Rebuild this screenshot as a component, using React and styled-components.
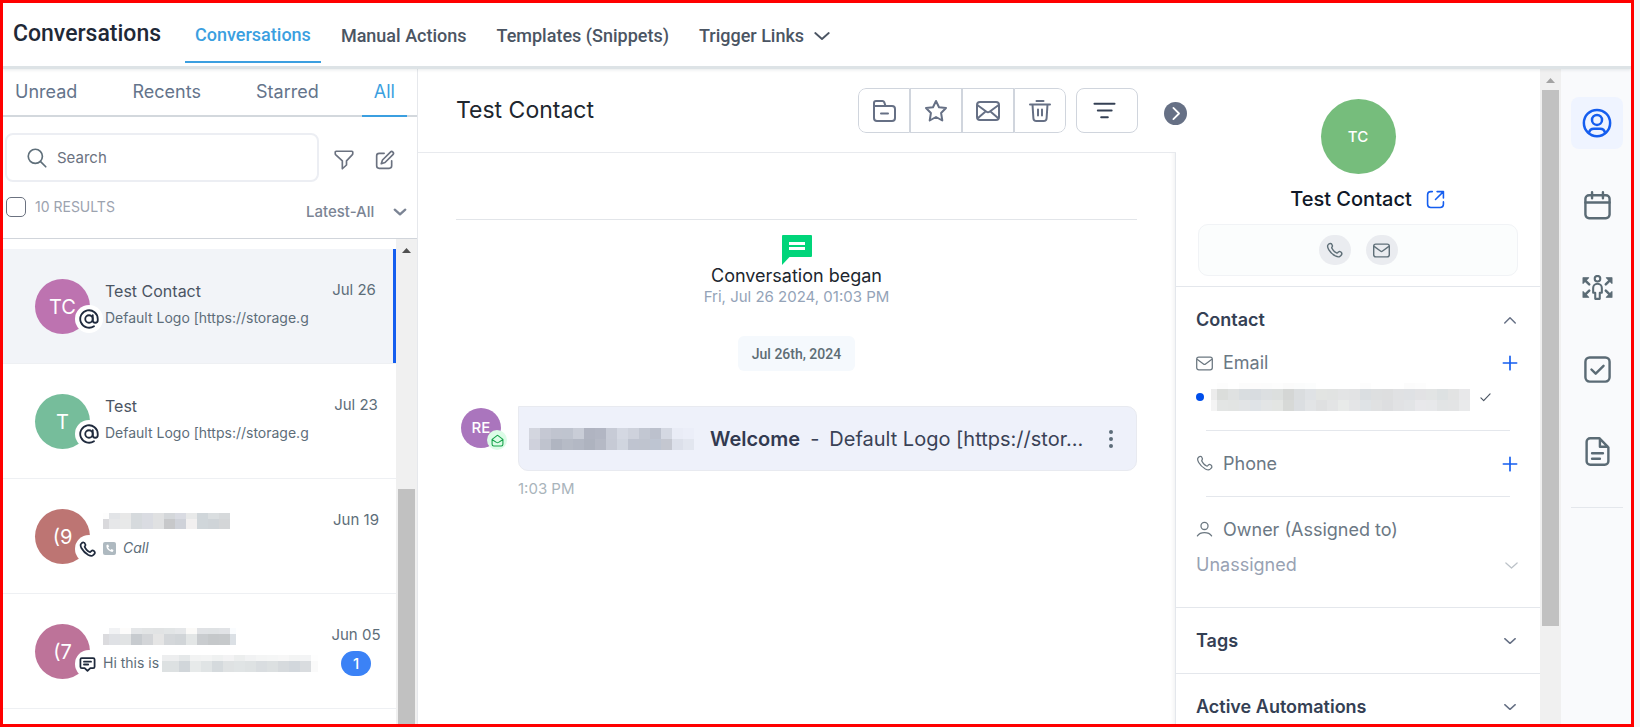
import React from "react";
import styled, { createGlobalStyle, css } from "styled-components";

const GlobalStyle = createGlobalStyle`
  *, *::before, *::after { box-sizing: border-box; }
  html, body, #root { height: 100%; }
  body {
    margin: 0;
    overflow: hidden;
    background: #f3f7fa;
    color: #2a3342;
    font-family: Inter, "Liberation Sans", sans-serif;
  }
  button, input, select { font: inherit; color: inherit; }
  button { padding: 0; border: 0; background: none; cursor: pointer; }
  a { color: inherit; text-decoration: none; }
  h1, h2, h3, p, ul { margin: 0; padding: 0; font-weight: inherit; }
  ul { list-style: none; }
  svg { display: block; flex: none; }
`;

/* ---------- icons ---------- */

const Svg = ({ size = 20, width, height, stroke = 2, box = "0 0 24 24", children }) => (
  <svg
    width={width || size}
    height={height || size}
    viewBox={box}
    fill="none"
    stroke="currentColor"
    strokeWidth={stroke}
    strokeLinecap="round"
    strokeLinejoin="round"
    aria-hidden="true"
  >
    {children}
  </svg>
);

const ChevronDown = (p) => <Svg {...p}><path d="M3 8l9 8 9-8" /></Svg>;
const ChevronUp = (p) => <Svg {...p}><path d="M3 17l9-9 9 9" /></Svg>;
const ChevronRight = (p) => <Svg {...p}><path d="M9 4l8 8-8 8" /></Svg>;
const SearchIcon = (p) => <Svg {...p}><circle cx="10" cy="10" r="8.500" /><path d="M16 16l6.500 6.500" /></Svg>;
const FunnelIcon = (p) => <Svg {...p}><path d="M2.500 1.500h19a1 1 0 0 1 1 1v2c0 .6-.3 1-.7 1.400L15 13v5l-5 4.500V13L2.200 5.900c-.4-.4-.7-.8-.7-1.400v-2a1 1 0 0 1 1-1z" /></Svg>;
const EditIcon = (p) => (
  <Svg {...p}>
    <path d="M11 4H5a3 3 0 0 0-3 3v12a3 3 0 0 0 3 3h12a3 3 0 0 0 3-3v-6" />
    <path d="M18.500 2.500a2.100 2.100 0 0 1 3 3L12 15l-4.500 1.500L9 12z" />
  </Svg>
);
const FolderMinus = (p) => (
  <Svg {...p}>
    <path d="M2 7V4a2 2 0 0 1 2-2h6.500c.8 0 1.400.4 1.700 1.100L13.500 7" />
    <path d="M2 7h18a3 3 0 0 1 3 3v9a3 3 0 0 1-3 3H5a3 3 0 0 1-3-3zM9 14.500h7" />
  </Svg>
);
const StarIcon = (p) => <Svg {...p}><path d="M12 2l3 6.200 7 .8-4.900 5 1.200 7.500L12 18l-6.300 3.500L6.900 14 2 9l7-.8z" /></Svg>;
const UnreadMail = (p) => (
  <Svg {...p}>
    <rect x="1" y="3" width="22" height="18" rx="3" />
    <path d="M2 6.500l8.500 6.200c.9.7 2.100.7 3 0L22 6.500M2 19l7-6M22 19l-7-6" />
  </Svg>
);
const TrashIcon = (p) => (
  <Svg {...p}>
    <path d="M8.500 2h7M2 5.500h20M4.500 5.500l.9 13.700A3 3 0 0 0 8.400 22h7.200a3 3 0 0 0 3-2.800l.9-13.700M10 10.500v6M14 10.500v6" />
  </Svg>
);
const LinesIcon = (p) => <Svg {...p}><path d="M1.500 5h21M5 12h14.500M8.500 19h7" /></Svg>;
const AtIcon = (p) => (
  <Svg {...p}>
    <circle cx="12" cy="12" r="4.500" />
    <path d="M16.500 7.500v6a3 3 0 0 0 6 0V12a10.500 10.500 0 1 0-4.500 8.600" />
  </Svg>
);
const PhoneIcon = (p) => (
  <Svg {...p}>
    <path d="M8.400 8.900a14 14 0 0 0 2.700 3.900 14 14 0 0 0 3.900 2.700c.3.100.7.100 1-.1l.5-.4c.9-.9 1.300-1.300 1.800-1.500.8-.3 1.600-.2 2.300.3l.5.300c1 .9 1.500 1.800 1.300 2.900-.2.800-.8 1.500-1.600 2.300-.8.800-1.300 1.300-2 1.500-1.600.5-3.600-.1-5.600-1.100a24 24 0 0 1-9.600-9.400C2.500 8.200 1.900 6.600 2.400 5c.3-.9.900-1.500 1.600-2.100.9-.7 1.700-1.100 2.600-.8.8.2 1.500.9 2 1.900.6 1 .7 1.800.2 2.700l-.6.8c-.3.400-.2.800.2 1.400z" />
  </Svg>
);
const ChatLines = (p) => (
  <Svg {...p}>
    <path d="M4 3h16a2 2 0 0 1 2 2v10a2 2 0 0 1-2 2h-4l-4 4-4-4H4a2 2 0 0 1-2-2V5a2 2 0 0 1 2-2zM7 8h10M7 12h6" />
  </Svg>
);
const MailIcon = (p) => (
  <Svg {...p}>
    <rect x="1" y="3" width="22" height="18" rx="3" />
    <path d="M2 6.500l8.500 6.200c.9.700 2.100.7 3 0L22 6.500" />
  </Svg>
);
const OpenMail = (p) => (
  <Svg {...p}>
    <path d="M2 10l9-7q1-.8 2 0l9 7v9a3 3 0 0 1-3 3H5a3 3 0 0 1-3-3zM2.500 10.500L10 15.500q2 1.200 4 0l7.500-5" />
  </Svg>
);
const ExternalIcon = (p) => (
  <Svg {...p}>
    <path d="M8 2H6a4 4 0 0 0-4 4v12a4 4 0 0 0 4 4h12a4 4 0 0 0 4-4v-3M14 2h8v8M22 2L12 12" />
  </Svg>
);
const PersonIcon = (p) => <Svg {...p}><circle cx="12" cy="7" r="5" /><path d="M2 21c2-3 6-4.500 10-4.500S20 18 22 21" /></Svg>;
const PlusIcon = (p) => <Svg {...p}><path d="M12 2v20M2 12h20" /></Svg>;
const CheckIcon = (p) => <Svg {...p}><path d="M2 13l6 6L22 4" /></Svg>;
const UserCircle = (p) => (
  <Svg {...p}>
    <circle cx="12" cy="12" r="10.500" />
    <circle cx="12" cy="9.500" r="4" />
    <path d="M5.500 20c.4-2 1.800-3.500 4-3.500h5c2.200 0 3.600 1.500 4 3.500" />
  </Svg>
);
const CalendarIcon = (p) => <Svg {...p}><rect x="2" y="3.500" width="20" height="19" rx="3" /><path d="M2 9.500h20M7.500 1v5M16.500 1v5" /></Svg>;
const TaskIcon = (p) => <Svg {...p}><rect x="2" y="2" width="20" height="20" rx="3.500" /><path d="M7 12l3.500 3.500L17 9" /></Svg>;
const NoteIcon = (p) => (
  <Svg {...p}>
    <path d="M13.500 1H6a3 3 0 0 0-3 3v16a3 3 0 0 0 3 3h12a3 3 0 0 0 3-3V8.500zM14 1.500V8h6.500M7.500 13.500h9M7.500 18h6.500" />
  </Svg>
);
const PeopleArrows = (p) => (
  <Svg {...p} box="0 0 30 24">
    <circle cx="15" cy="3.500" r="2.700" />
    <path d="M10.800 17v-4.500a4.200 4.200 0 0 1 8.400 0V17h-2v6h-4.400v-6z" />
    <path d="M1 2.500h5.500L1 8zM29 2.500h-5.500L29 8zM1 21.500h5.500L1 16zM29 21.500h-5.500L29 16z" fill="currentColor" strokeWidth="1" />
    <path d="M3 5l4 4M27 5l-4 4M3 19l4-4M27 19l-4-4" strokeWidth="2.400" />
  </Svg>
);
const ChatBlock = () => (
  <svg width="30" height="30" viewBox="0 0 30 30" aria-hidden="true">
    <path d="M1 0h28a1 1 0 0 1 1 1v20a1 1 0 0 1-1 1H7.500L0 30V1a1 1 0 0 1 1-1z" fill="#00d57a" />
    <path d="M7 7h16v3H7zM7 12h16v3H7z" fill="#fff" />
  </svg>
);
const CallTile = () => (
  <svg width="13" height="13" viewBox="0 0 13 13" aria-hidden="true">
    <rect width="13" height="13" rx="2" fill="#aeb9c0" />
    <path d="M3.500 3l1.600-.5 1 2-1 1q.8 1.600 2.400 2.400l1-1 2 1-.5 1.700Q9 10.500 6 8.500T3.500 3z" fill="#fff" />
  </svg>
);
const Triangle = () => (
  <svg width="9" height="5" viewBox="0 0 9 5" aria-hidden="true"><path d="M4.500 0L9 5H0z" fill="currentColor" /></svg>
);

/* Blocks that hide private names; each row is [height, cells]. Cells are 11px wide, the outer two may be cut. */
const Mosaic = ({ first = 6, last = 11, rows }) => {
  const count = rows[0][1].split(" ").length;
  const width = first + 11 * (count - 2) + last;
  let y = 0;
  return (
    <svg width={width} height={rows.reduce((s, r) => s + r[0], 0)} shapeRendering="crispEdges" aria-hidden="true">
      {rows.map(([h, cells], r) => {
        const top = y;
        y += h;
        return cells.split(" ").map((c, i) => (
          <rect
            key={`${r}-${i}`}
            x={i === 0 ? 0 : first + 11 * (i - 1)}
            y={top}
            width={i === 0 ? first : i === count - 1 ? last : 11}
            height={h}
            fill={`#${c}`}
          />
        ));
      })}
    </svg>
  );
};

const emailMosaic = [
  [6, "fff fdfdfd fff fcfcfc fdfcfc fcfcfc fdfdfd fbfbfb fbfcfc fcfdfd fff fff fff fff fdfdfd fff fff fff fcfcfc fdfdfd fff fff fff fff"],
  [11, "ececec dbdddb dfe1e1 d9dde0 d8dce0 dcdfe1 dcdfde d4d6d5 dadddf dfe2e5 e2e4e2 e1e3e2 e3e4e5 e2e3e4 dadee1 dddfe0 dddedf e0e1e3 dfe1e4 e2e2e4 e2e4e4 dde1e2 e2e3e3 e8e8ea"],
  [11, "f4f4f4 e3e5e4 e2e4e3 e2e4e6 dfe3e7 e3e5e6 e3e5e3 d7d9d7 dbdee1 e2e4e6 dfe0e1 e3e4e5 e8eae9 e4e5e7 dfe3e6 e0e1e2 dddee0 e1e2e4 e2e4e6 e8e8eb e7e8ea e2e4e5 e3e4e5 e9eaeb"],
];
const callMosaic = [
  [6, "fdfdfd e2e4e7 e8e8e8 d6dadd dadce2 e0e1e2 d4d7da d9dbe2 e8e9e9 d0d6da dadee0 d6d9db"],
  [10, "d9d9dc e6e7e9 e8e9e9 d6dadd dadce2 e0e1e2 c7c8ca cfd2d9 f2f0f0 d0d6da cfd4d8 d4d6d8"],
];
const smsMosaic = [
  [6, "fff f1f2f4 fdfcfb e4e6e8 e2e4e5 e1e3e4 e2e5e6 e5e7e9 fbfaf8 e0e2e5 dfe2e4 e1e3e6 fafcfe"],
  [11, "dbdbde dfe1e5 e1e3e4 c7cbcf d3d5d8 e5e5e5 d4d7da d1d5d8 e3e6e6 c9cccf c5c8ca c6c9cb dbe0e5"],
];
const hiMosaic = [
  [6, "edeeef e5e8e9 f2f3f3 f3f4f4 eff1f1 f3f3f4 eceeee f1f2f3 f4f5f5 f5f6f6 f7f7f7 f3f4f4 f3f4f5 fefefe"],
  [11, "dde1e2 d1d6da e7eaea e0e4e5 d5dadd dfe2e3 e0e4e5 dee2e3 d9dde0 dce0e1 d6dadd d2d7dc d9dcdf fafafa"],
];
const senderMosaic = [
  [11, "d3d6df c5c8d3 c0c4cf bfc4cf c9cdd7 b0b4c1 b2b6c3 c7cbd6 d4d8e2 ced2dc c2c7d2 bcc1cd d4d8e2 e9ecf6 ebeef8"],
  [11, "cfd1dc bfc3ce b0b5c1 b6bbc6 b3b8c4 aeb3bf b5b9c5 c6cad5 d0d5df bfc4d0 bfc4cf bec5d2 c4c7d0 dce0ea e2e6ef"],
];

/* ---------- shell ---------- */

const Frame = styled.div`
  display: flex;
  flex-direction: column;
  height: 100%;
  margin-right: 6px;
  border: 3px solid #ff0000;
  background: #fff;
  overflow: hidden;
`;

const TopBar = styled.header`
  display: flex;
  align-items: stretch;
  flex: none;
  height: 66px;
  padding-left: 10px;
  border-bottom: 3px solid #dde3e6;
  box-shadow: 0 1px 3px rgba(60, 80, 90, 0.12);
  position: relative;
  z-index: 2;
  font-family: Roboto, "Liberation Sans", sans-serif;
  font-weight: 500;
`;

const AppTitle = styled.h1`
  margin-right: 24px;
  padding-top: 17px;
  color: #1f2937;
  font-size: 23px;
  line-height: 28px;
  font-weight: 500;
`;

const TopNav = styled.nav`
  display: flex;
  gap: 10px;
  height: 60px;
`;

const navItem = css`
  display: flex;
  align-items: center;
  gap: 9px;
  padding: 6px 10px 0;
  color: #4b5563;
  font-size: 18px;
  line-height: 24px;
  font-weight: 500;
`;
const NavLink = styled.a`
  ${navItem}
  ${(p) => p.$active && css`
    color: #3b9fe0;
    border-bottom: 2px solid #3b9fe0;
  `}
`;
const NavMenu = styled.button`
  ${navItem}
`;

const Body = styled.div`
  display: flex;
  flex: 1;
  min-height: 0;
`;

/* ---------- scroll bar ---------- */

const Track = styled.div`
  flex: none;
  display: flex;
  flex-direction: column;
  align-items: center;
  width: 21px;
  padding-top: ${(p) => p.$top}px;
  background: #f0f0f0;
  color: ${(p) => p.$arrow};
`;
const Thumb = styled.div`
  width: 17px;
  flex: 0 0 ${(p) => p.$length};
  margin-top: ${(p) => p.$gap}px;
  background: #c1c1c1;
`;

/* ---------- conversation list ---------- */

const Sidebar = styled.aside`
  display: flex;
  flex-direction: column;
  flex: none;
  width: 415px;
  border-right: 1px solid #e6e8ec;
`;

const Tabs = styled.div`
  display: flex;
  justify-content: space-between;
  flex: none;
  height: 48px;
  padding-right: 10px;
  border-bottom: 2px solid #d3d8dd;
`;
const Tab = styled.button`
  height: 48px;
  padding: 0 12px;
  border-bottom: 2px solid ${(p) => (p.$active ? "#3b9fe0" : "transparent")};
  color: ${(p) => (p.$active ? "#3b9fe0" : "#64748b")};
  font-size: 18px;
  line-height: 24px;
`;

const Tools = styled.div`
  flex: none;
  height: 122px;
  border-bottom: 1px solid #d1d5db;
`;
const SearchRow = styled.div`
  display: flex;
  align-items: center;
  gap: 15px;
  padding: 16px 24px 0 2px;
  color: #6b7280;
`;
const SearchBox = styled.label`
  display: flex;
  align-items: center;
  gap: 10px;
  flex: 1;
  height: 49px;
  padding: 0 20px;
  border: 2px solid #eceef3;
  border-radius: 8px;
  color: #5f6f7a;
`;
const SearchInput = styled.input`
  flex: 1;
  min-width: 0;
  padding: 1px 0 0;
  border: 0;
  outline: 0;
  background: none;
  font-size: 15px;
  line-height: 20px;
  &::placeholder { color: #6b7280; opacity: 1; }
`;
const IconButton = styled.button`
  display: flex;
  width: 20px;
  padding-top: 4px;
  justify-content: center;
  & + & { margin: 0 6px; }
`;
const ResultRow = styled.div`
  display: flex;
  align-items: flex-start;
  justify-content: space-between;
  padding: 15px 10px 0 3px;
`;
const SelectAll = styled.label`
  display: flex;
  align-items: center;
  gap: 9px;
  color: #9ca3af;
  font-size: 14px;
  line-height: 20px;
`;
const CheckBox = styled.input`
  appearance: none;
  width: 20px;
  height: 20px;
  margin: 0;
  border: 1px solid #6b7280;
  border-radius: 5px;
`;
const SortBox = styled.label`
  display: flex;
  align-items: center;
  margin-top: 5px;
  color: #7b8494;
`;
const SortSelect = styled.select`
  appearance: none;
  width: 87px;
  padding: 0;
  border: 0;
  background: none;
  font-size: 15px;
  line-height: 20px;
  font-weight: 500;
`;

const ListArea = styled.div`
  display: flex;
  flex: 1;
  min-height: 0;
`;
const List = styled.ul`
  flex: 1;
  padding-top: 10px;
  overflow: hidden;
`;
const Item = styled.li`
  display: flex;
  height: 115px;
  padding: 30px 10px 0 32px;
  border-bottom: 1px solid #eef0f3;
  ${(p) => p.$active && css`
    padding-right: 12px;
    background: #f2f4f8;
    box-shadow: inset -3px 0 0 #155eef;
  `}
`;
const AvatarWrap = styled.div`
  position: relative;
  flex: none;
  width: ${(p) => p.$size}px;
  height: ${(p) => p.$size}px;
`;
const Avatar = styled.div`
  display: flex;
  align-items: center;
  justify-content: center;
  width: ${(p) => p.$size}px;
  height: ${(p) => p.$size}px;
  border-radius: 50%;
  background: ${(p) => p.$color};
  color: #fff;
  font-size: ${(p) => p.$font}px;
  line-height: 24px;
  font-weight: ${(p) => p.$weight || 400};
`;
const ChannelBadge = styled.span`
  position: absolute;
  left: 40px;
  top: 26px;
  display: flex;
  align-items: center;
  justify-content: center;
  width: 28px;
  height: 28px;
  padding-right: ${(p) => (p.$small ? 4 : 0)}px;
  border-radius: 50%;
  background: #fff;
  color: #1f2a3d;
`;
const ItemText = styled.div`
  display: flex;
  flex-direction: column;
  gap: 7px;
  flex: 1;
  min-width: 0;
  padding: 2px 0 0 ${(p) => (p.$hidden ? 13 : 15)}px;
`;
const ItemName = styled.h3`
  display: flex;
  align-items: center;
  height: 20px;
  color: #4b5563;
  font-size: 16px;
  line-height: 20px;
`;
const Preview = styled.p`
  display: flex;
  align-items: center;
  gap: ${(p) => p.$gap || 0}px;
  height: 20px;
  white-space: nowrap;
  color: #5d6d79;
  font-size: 14px;
  line-height: 20px;
`;
const ItemMeta = styled.div`
  display: flex;
  flex-direction: column;
  align-items: center;
  gap: 6px;
  flex: none;
  width: 60px;
  padding-top: 1px;
  color: #5d6d79;
  font-size: 15px;
  line-height: 20px;
  white-space: nowrap;
`;
const Count = styled.span`
  padding: 0 12px;
  border-radius: 13px;
  background: #3b82f6;
  color: #fff;
  font-size: 15px;
  line-height: 25px;
  font-weight: 500;
`;

/* ---------- message thread ---------- */

const Thread = styled.main`
  display: flex;
  flex-direction: column;
  flex: 1;
  min-width: 0;
`;
const ThreadHead = styled.div`
  display: flex;
  align-items: center;
  flex: none;
  height: 84px;
  padding: 0 38px;
  border-bottom: 1px solid #e8eaee;
`;
const ThreadTitle = styled.h2`
  flex: 1;
  padding-bottom: 1px;
  color: #20262e;
  font-size: 23px;
  line-height: 28px;
`;
const Group = styled.div`
  display: flex;
  margin-right: 10px;
  border-radius: 8px;
  overflow: hidden;
`;
const ToolButton = styled.button`
  display: flex;
  align-items: center;
  justify-content: center;
  width: 52px;
  height: 45px;
  border: 1px solid #d0d5dd;
  color: #667085;
  &:first-child { border-radius: 8px 0 0 8px; }
  &:last-child { border-radius: 0 8px 8px 0; }
`;
const FilterButton = styled.button`
  display: flex;
  align-items: center;
  width: 62px;
  height: 45px;
  padding-left: 16px;
  border: 1px solid #d0d5dd;
  border-radius: 8px;
  color: #344054;
`;
const Messages = styled.div`
  flex: 1;
  padding: 66px 38px 0;
  border-right: 1px solid #e4e7ec;
  box-shadow: inset -4px 0 4px -3px rgba(16, 24, 40, 0.07);
`;
const Began = styled.div`
  display: flex;
  flex-direction: column;
  align-items: center;
  padding-top: 15px;
  border-top: 1px solid #e2e5e9;
`;
const BeganTitle = styled.p`
  color: #20262e;
  font-size: 18px;
  line-height: 22px;
`;
const BeganDate = styled.p`
  color: #94a3b8;
  font-size: 15px;
  line-height: 20px;
`;
const DayPill = styled.p`
  margin: 29px 0 35px;
  padding: 2px 14px 0;
  border-radius: 6px;
  background: #f5f9fd;
  color: #5d6d75;
  font-family: Roboto, "Liberation Sans", sans-serif;
  font-size: 14px;
  line-height: 33px;
  font-weight: 500;
`;
const MessageRow = styled.div`
  display: flex;
  gap: 17px;
  padding-left: 5px;
`;
const SenderAvatar = styled(AvatarWrap)`
  margin-top: 2px;
`;
const MailBadge = styled.span`
  position: absolute;
  left: 26px;
  top: 22px;
  display: flex;
  align-items: center;
  justify-content: center;
  width: 20px;
  height: 20px;
  border-radius: 50%;
  background: #dcfce7;
  color: #16a34a;
`;
const MessageCol = styled.div`
  flex: 1;
  min-width: 0;
`;
const Bubble = styled.div`
  display: flex;
  align-items: center;
  height: 65px;
  padding: 0 23px 0 10px;
  border: 1px solid #e8eaf0;
  border-radius: 0 10px 10px 10px;
  background: #eef1fa;
  color: #3a4256;
  font-size: 20px;
  line-height: 28px;
`;
const Subject = styled.strong`
  margin: 0 10px 0 16px;
  color: #323a50;
  font-weight: 600;
  white-space: nowrap;
`;
const Excerpt = styled.span`
  flex: 1;
  min-width: 0;
  margin-left: 10px;
  white-space: nowrap;
`;
const Kebab = styled.button`
  display: grid;
  gap: 3px;
  &::before, &::after, & > span {
    content: "";
    width: 4px;
    height: 4px;
    border-radius: 50%;
    background: #5d6d79;
  }
`;
const Time = styled.time`
  display: block;
  margin-top: 8px;
  color: #a9b4bb;
  font-size: 15px;
  line-height: 20px;
`;

/* ---------- contact panel ---------- */

const Panel = styled.aside`
  position: relative;
  flex: none;
  width: 364px;
  height: 100%;
`;
const PanelBody = styled.div`
  height: 100%;
  overflow: hidden;
`;
const Collapse = styled.button`
  position: absolute;
  left: -12px;
  top: 33px;
  z-index: 1;
  display: flex;
  align-items: center;
  justify-content: center;
  width: 23px;
  height: 23px;
  border-radius: 50%;
  background: #667085;
  color: #fff;
`;
const Profile = styled.div`
  display: flex;
  flex-direction: column;
  align-items: center;
  padding: 30px 22px 10px;
  border-bottom: 1px solid #e4e7ec;
`;
const ProfileName = styled.h2`
  display: flex;
  align-items: center;
  gap: 14px;
  margin: 11px 0;
  padding-left: 19px;
  color: #101828;
  font-size: 20px;
  line-height: 28px;
  font-weight: 500;
  a { color: #155eef; }
`;
const Actions = styled.div`
  display: flex;
  align-items: center;
  justify-content: center;
  gap: 15px;
  width: 100%;
  height: 52px;
  border: 1px solid #f1f3f6;
  border-radius: 10px;
  background: #fbfdfd;
`;
const ActionButton = styled.button`
  display: flex;
  align-items: center;
  justify-content: center;
  width: 32px;
  height: 30px;
  border-radius: 16px;
  background: #eaecf0;
  color: #5f6f78;
`;
const Section = styled.section`
  padding: 0 20px;
  border-bottom: 1px solid #e4e7ec;
  color: #6b7884;
  font-size: 18px;
  line-height: 24px;
`;
const SectionHead = styled.button`
  display: flex;
  align-items: center;
  justify-content: space-between;
  width: 100%;
  height: 65px;
  padding-right: 3px;
  color: #344054;
  font-size: 18px;
  line-height: 24px;
  font-weight: 600;
  svg { color: #667085; }
`;
const Field = styled.div`
  display: flex;
  align-items: center;
  height: ${(p) => p.$height || 22}px;
  padding-top: ${(p) => p.$top || 0}px;
  padding-right: 2px;
`;
const FieldIcon = styled.span`
  display: flex;
  width: 27px;
  color: #6b7780;
`;
const FieldName = styled.span`
  flex: 1;
`;
const AddButton = styled.button`
  color: #155eef;
`;
const Rule = styled.hr`
  height: 1px;
  margin: 0 10px;
  border: 0;
  background: #e4e7ec;
`;
const EmailValue = styled.div`
  display: flex;
  align-items: center;
  gap: 10px;
  height: 56px;
  padding-bottom: 10px;
  color: #4b5563;
`;
const Dot = styled.span`
  width: 8px;
  height: 8px;
  margin-right: -3px;
  border-radius: 50%;
  background: #004eeb;
`;
const OwnerBox = styled.div`
  display: flex;
  align-items: center;
  height: 24px;
  margin-bottom: 30px;
  padding-right: 1px;
  color: #bcc2c8;
`;
const OwnerSelect = styled.select`
  flex: 1;
  appearance: none;
  padding: 0;
  border: 0;
  background: none;
  color: #98a2b3;
  font-size: 18px;
  line-height: 24px;
`;

/* ---------- icon rail ---------- */

const Rail = styled.nav`
  display: flex;
  flex-direction: column;
  align-items: center;
  gap: 30px;
  flex: none;
  width: 70px;
  padding-top: 28px;
  padding-left: 2px;
  background: #f9fafc;
  color: #5b6b75;
`;
const RailButton = styled.button`
  display: flex;
  align-items: center;
  justify-content: center;
  width: 52px;
  height: 52px;
  border-radius: 8px;
  ${(p) => p.$active && css`
    background: #eff4ff;
    color: #155eef;
  `}
`;
const RailRule = styled.hr`
  width: 52px;
  height: 1px;
  margin: 0;
  border: 0;
  background: #e4e7ec;
`;

/* ---------- content ---------- */

const conversations = [
  { id: 1, initials: "TC", color: "#bd73b0", channel: "mail", name: "Test Contact", text: "Default Logo [https://storage.g", date: "Jul 26", active: true },
  { id: 2, initials: "T", color: "#76bd9b", channel: "mail", name: "Test", text: "Default Logo [https://storage.g", date: "Jul 23" },
  { id: 3, initials: "(9", color: "#bd7573", channel: "call", mosaic: callMosaic, date: "Jun 19" },
  { id: 4, initials: "(7", color: "#bd7399", channel: "sms", mosaic: smsMosaic, last: 6, date: "Jun 05", count: 1 },
];

const channelIcon = {
  mail: <AtIcon size={20} stroke={2.200} />,
  call: <PhoneIcon size={17} stroke={2.500} />,
  sms: <ChatLines size={17} stroke={2.500} />,
};

function Conversation({ item }) {
  return (
    <Item $active={item.active}>
      <AvatarWrap $size={55}>
        <Avatar $size={55} $color={item.color} $font={20}>{item.initials}</Avatar>
        <ChannelBadge $small={item.channel !== "mail"}>{channelIcon[item.channel]}</ChannelBadge>
      </AvatarWrap>
      <ItemText $hidden={!item.name}>
        <ItemName>{item.name || <Mosaic rows={item.mosaic} last={item.last} />}</ItemName>
        {item.channel === "mail" && <Preview>{item.text}</Preview>}
        {item.channel === "call" && <Preview $gap={7}><CallTile /><em>Call</em></Preview>}
        {item.channel === "sms" && <Preview $gap={3}>Hi this is <Mosaic rows={hiMosaic} first={17} last={7} /></Preview>}
      </ItemText>
      <ItemMeta>
        <span>{item.date}</span>
        {item.count && <Count>{item.count}</Count>}
      </ItemMeta>
    </Item>
  );
}

export default function App() {
  return (
    <>
      <GlobalStyle />
      <Frame>
        <TopBar>
          <AppTitle>Conversations</AppTitle>
          <TopNav aria-label="Sections">
            <NavLink href="#conversations" $active>Conversations</NavLink>
            <NavLink href="#manual">Manual Actions</NavLink>
            <NavLink href="#templates">Templates (Snippets)</NavLink>
            <NavMenu type="button">Trigger Links<ChevronDown size={18} stroke={2.500} /></NavMenu>
          </TopNav>
        </TopBar>
        <Body>
          <Sidebar>
            <Tabs role="tablist">
              <Tab role="tab">Unread</Tab>
              <Tab role="tab">Recents</Tab>
              <Tab role="tab">Starred</Tab>
              <Tab role="tab" aria-selected="true" $active>All</Tab>
            </Tabs>
            <Tools>
              <SearchRow>
                <SearchBox>
                  <SearchIcon size={20} />
                  <SearchInput type="search" placeholder="Search" aria-label="Search" />
                </SearchBox>
                <IconButton aria-label="Filter"><FunnelIcon size={20} /></IconButton>
                <IconButton aria-label="Compose"><EditIcon size={20} /></IconButton>
              </SearchRow>
              <ResultRow>
                <SelectAll><CheckBox type="checkbox" />10 RESULTS</SelectAll>
                <SortBox>
                  <SortSelect aria-label="Sort"><option>Latest-All</option></SortSelect>
                  <ChevronDown size={14} stroke={4} />
                </SortBox>
              </ResultRow>
            </Tools>
            <ListArea>
              <List>{conversations.map((c) => <Conversation key={c.id} item={c} />)}</List>
              <Track $top={9} $arrow="#505050">
                <Triangle />
                <Thumb $gap={236} $length="100%" />
              </Track>
            </ListArea>
          </Sidebar>

          <Thread>
            <ThreadHead>
              <ThreadTitle>Test Contact</ThreadTitle>
              <Group>
                <ToolButton aria-label="Archive"><FolderMinus size={24} /></ToolButton>
                <ToolButton aria-label="Star"><StarIcon size={24} /></ToolButton>
                <ToolButton aria-label="Mark unread"><UnreadMail size={24} /></ToolButton>
                <ToolButton aria-label="Delete"><TrashIcon size={24} /></ToolButton>
              </Group>
              <FilterButton aria-label="Filter messages"><LinesIcon size={23} /></FilterButton>
            </ThreadHead>
            <Messages>
              <Began>
                <ChatBlock />
                <BeganTitle>Conversation began</BeganTitle>
                <BeganDate>Fri, Jul 26 2024, 01:03 PM</BeganDate>
                <DayPill>Jul 26th, 2024</DayPill>
              </Began>
              <MessageRow>
                <SenderAvatar $size={40}>
                  <Avatar $size={40} $color="#aa75bd" $font={15} $weight={500}>RE</Avatar>
                  <MailBadge><OpenMail size={13} stroke={2} /></MailBadge>
                </SenderAvatar>
                <MessageCol>
                  <Bubble>
                    <Mosaic first={11} rows={senderMosaic} />
                    <Subject>Welcome</Subject>
                    <span>-</span>
                    <Excerpt>Default Logo [https://stor...</Excerpt>
                    <Kebab aria-label="Message options"><span /></Kebab>
                  </Bubble>
                  <Time>1:03 PM</Time>
                </MessageCol>
              </MessageRow>
            </Messages>
          </Thread>

          <Panel>
            <Collapse aria-label="Collapse panel"><ChevronRight size={17} stroke={2.500} /></Collapse>
            <PanelBody>
              <Profile>
                <Avatar $size={75} $color="#76bd7c" $font={15} $weight={500}>TC</Avatar>
                <ProfileName>
                  Test Contact
                  <a href="#contact" aria-label="Open contact"><ExternalIcon size={19} /></a>
                </ProfileName>
                <Actions>
                  <ActionButton aria-label="Call"><PhoneIcon size={17} /></ActionButton>
                  <ActionButton aria-label="Email"><MailIcon size={17} /></ActionButton>
                </Actions>
              </Profile>
              <Section>
                <SectionHead>Contact<ChevronUp size={14} stroke={2.500} /></SectionHead>
                <Field>
                  <FieldIcon><MailIcon size={17} stroke={1.800} /></FieldIcon>
                  <FieldName>Email</FieldName>
                  <AddButton aria-label="Add email"><PlusIcon size={16} stroke={2.500} /></AddButton>
                </Field>
                <EmailValue><Dot /><Mosaic rows={emailMosaic} /><CheckIcon size={11} stroke={2.500} /></EmailValue>
                <Rule />
                <Field $height={65}>
                  <FieldIcon><PhoneIcon size={17} stroke={1.800} /></FieldIcon>
                  <FieldName>Phone</FieldName>
                  <AddButton aria-label="Add phone"><PlusIcon size={16} stroke={2.500} /></AddButton>
                </Field>
                <Rule />
                <Field $height={56} $top={9}>
                  <FieldIcon><PersonIcon size={17} stroke={1.800} /></FieldIcon>
                  <FieldName>Owner (Assigned to)</FieldName>
                </Field>
                <OwnerBox>
                  <OwnerSelect aria-label="Owner"><option>Unassigned</option></OwnerSelect>
                  <ChevronDown size={15} />
                </OwnerBox>
              </Section>
              <Section><SectionHead>Tags<ChevronDown size={14} stroke={2.500} /></SectionHead></Section>
              <Section><SectionHead>Active Automations<ChevronDown size={14} stroke={2.500} /></SectionHead></Section>
            </PanelBody>
          </Panel>
          <Track $top={9} $arrow="#a3a3a3">
            <Triangle />
            <Thumb $gap={7} $length="83%" />
          </Track>

          <Rail aria-label="Contact tools">
            <RailButton $active aria-label="Contact"><UserCircle size={30} /></RailButton>
            <RailButton aria-label="Appointments"><CalendarIcon size={29} /></RailButton>
            <RailButton aria-label="Opportunities"><PeopleArrows width={31} height={25} /></RailButton>
            <RailButton aria-label="Tasks"><TaskIcon size={29} /></RailButton>
            <RailButton aria-label="Notes"><NoteIcon size={29} /></RailButton>
            <RailRule />
          </Rail>
        </Body>
      </Frame>
    </>
  );
}
